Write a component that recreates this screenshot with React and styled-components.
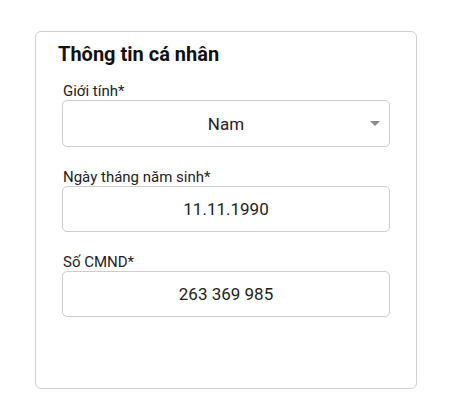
import React from 'react'
import styled, { createGlobalStyle } from 'styled-components'

const GlobalStyle = createGlobalStyle`
  html, body {
    margin: 0;
    padding: 0;
    background: #fff;
    font-family: Roboto, "Liberation Sans", sans-serif;
  }
`

const Page = styled.div`
  width: 450px;
  height: 413px;
  box-sizing: border-box;
  padding: 31px 0 0 35px;
`

const Card = styled.section`
  width: 382px;
  height: 358px;
  box-sizing: border-box;
  border: 1px solid #cfcfcf;
  border-radius: 6px;
  padding: 10px 22px 0;
  display: flex;
  flex-direction: column;
`

const Title = styled.h2`
  margin: 0 0 17px;
  font-size: 20px;
  line-height: 24px;
  font-weight: 700;
  color: #111;
`

const Fields = styled.div`
  display: flex;
  flex-direction: column;
  gap: 22px;
  padding: 0 4px;
`

const Field = styled.label`
  display: flex;
  flex-direction: column;
`

const Label = styled.span`
  font-size: 15px;
  line-height: 17px;
  color: #222;
  padding-left: 1px;
`

const Box = styled.div`
  position: relative;
  height: ${p => p.$h || 46}px;
  box-sizing: border-box;
  border: 1px solid #cdcdcd;
  border-radius: 5px;
  display: flex;
  align-items: center;
  justify-content: center;
  font-size: 17px;
  color: #222;
`

const Caret = styled.span`
  position: absolute;
  right: 9px;
  top: 50%;
  margin-top: -3px;
  width: 0;
  height: 0;
  border-left: 5px solid transparent;
  border-right: 5px solid transparent;
  border-top: 5px solid #8a8a8a;
`

const fields = [
  { label: 'Ngày tháng năm sinh*', value: '11.11.1990' },
  { label: 'Số CMND*', value: '263 369 985' },
]

export default function App() {
  return (
    <Page>
      <GlobalStyle />
      <Card>
        <Title>Thông tin cá nhân</Title>
        <Fields>
          <Field>
            <Label>Giới tính*</Label>
            <Box $h={47}>
              Nam
              <Caret />
            </Box>
          </Field>
          {fields.map(f => (
            <Field key={f.label}>
              <Label>{f.label}</Label>
              <Box>{f.value}</Box>
            </Field>
          ))}
        </Fields>
      </Card>
    </Page>
  )
}
